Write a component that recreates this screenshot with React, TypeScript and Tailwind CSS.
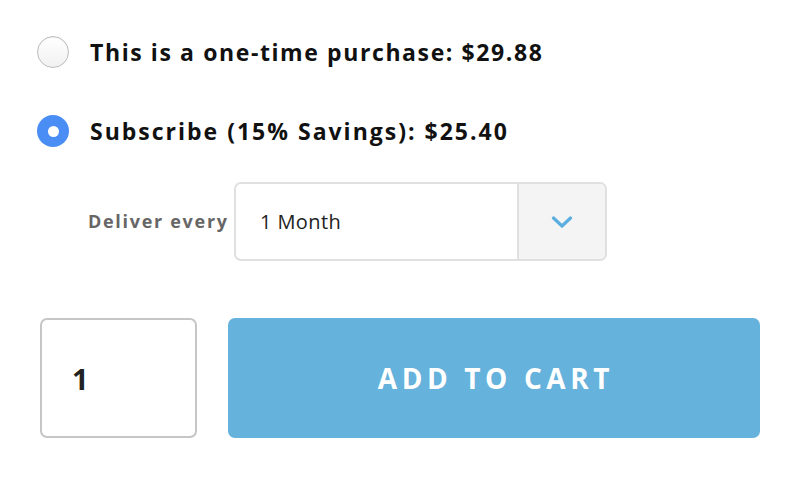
import React, { useState } from 'react';

const FONT = "font-['Open_Sans','Noto_Sans',sans-serif]";

const Radio: React.FC<{ checked: boolean; onClick: () => void }> = ({ checked, onClick }) =>
    checked ? (
        <button onClick={onClick} className="w-[32px] h-[32px] rounded-full bg-[#4a8ef5] flex items-center justify-center shrink-0">
            <span className="w-[11px] h-[11px] rounded-full bg-white" />
        </button>
    ) : (
        <button
            onClick={onClick}
            className="w-[32px] h-[32px] rounded-full border border-[#bdbdbd] bg-gradient-to-b from-white to-[#f1f1f1] shadow-[inset_0_1px_1px_rgba(0,0,0,0.06)] shrink-0"
        />
    );

const App: React.FC = () => {
    const [plan, setPlan] = useState<'once' | 'sub'>('sub');
    const [qty, setQty] = useState('1');

    return (
        <div className={`w-[798px] h-[482px] bg-white ${FONT} text-[#111] pt-[36px] pl-[37px]`}>
            {/* Purchase options */}
            <div className="flex items-center gap-[21px] h-[32px]">
                <Radio checked={plan === 'once'} onClick={() => setPlan('once')} />
                <span className="text-[23px] font-bold tracking-[1.6px]">This is a one-time purchase: $29.88</span>
            </div>
            <div className="flex items-center gap-[21px] h-[32px] mt-[47px]">
                <Radio checked={plan === 'sub'} onClick={() => setPlan('sub')} />
                <span className="text-[23px] font-bold tracking-[2px]">Subscribe (15% Savings): $25.40</span>
            </div>

            {/* Delivery interval */}
            <div className="flex items-center mt-[35px] pl-[51px]">
                <span className="w-[146px] text-[18px] font-bold tracking-[1.7px] text-[#666]">Deliver every</span>
                <div className="flex w-[373px] h-[79px] border-2 border-[#e0e0e0] rounded-[7px] overflow-hidden">
                    <div className="flex-1 flex items-center pl-[24px] text-[20px] tracking-[0.4px] text-[#222]">1 Month</div>
                    <div className="w-[88px] border-l-2 border-[#e0e0e0] bg-[#f4f4f4] flex items-center justify-center">
                        <svg width="22" height="12" viewBox="0 0 22 12" fill="none">
                            <path d="M2.5 2l8.5 8 8.5-8" stroke="#5aafe0" strokeWidth="3.2" strokeLinecap="round" strokeLinejoin="round" />
                        </svg>
                    </div>
                </div>
            </div>

            {/* Quantity + add to cart */}
            <div className="flex mt-[57px] pl-[3px] gap-[31px]">
                <input
                    value={qty}
                    onChange={(e) => setQty(e.target.value)}
                    className="w-[157px] h-[120px] border-2 border-[#c6c6c6] rounded-[7px] pl-[30px] text-[29px] font-bold text-[#222] outline-none"
                />
                <button className="w-[532px] h-[120px] bg-[#65b2dc] rounded-[7px] text-white text-[28px] font-bold tracking-[4.6px] pl-[4px]">
                    ADD TO CART
                </button>
            </div>
        </div>
    );
};

export default App;
